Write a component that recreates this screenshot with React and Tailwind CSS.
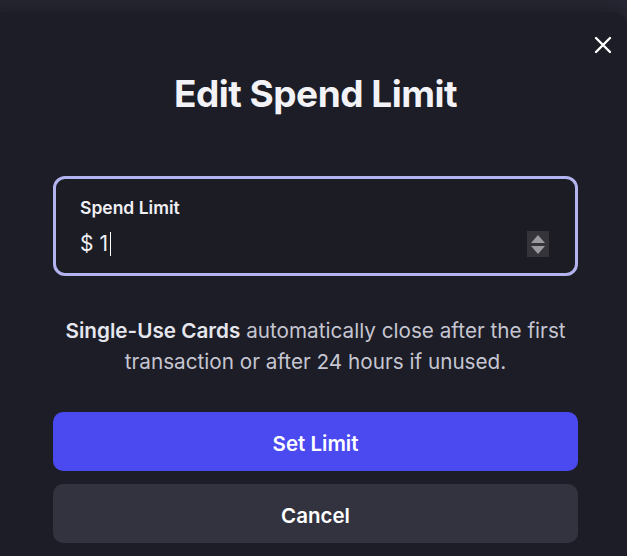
export default function App() {
  return (
    <div
      className="w-[627px] h-[556px] overflow-hidden bg-[#282935] pt-[12px]"
      style={{ fontFamily: 'Inter, "Noto Sans", sans-serif' }}
    >
      <div className="relative -ml-[20px] w-[648px] h-[600px] rounded-2xl bg-[#1c1d26] shadow-[0_-4px_24px_rgba(0,0,0,0.35)] pl-[73px] pr-[50px] pt-[60px]">
        <button className="absolute right-[16px] top-[24px] text-white">
          <svg width="18" height="18" viewBox="0 0 18 18" fill="none" stroke="currentColor" strokeWidth="2.4" strokeLinecap="round">
            <path d="M2 2 L16 16 M16 2 L2 16" />
          </svg>
        </button>

        <h1 className="text-center text-[37px] leading-[44px] font-bold tracking-[-0.5px] text-[#f2f2f7]">
          Edit Spend Limit
        </h1>

        <div className="mt-[60px] h-[100px] rounded-[12px] border-[3px] border-[#b3b3ef] bg-[#1b1c24] pl-[24px] pr-[26px] pt-[18px]">
          <div className="text-[17.5px] leading-[22px] font-semibold text-[#f0f0f5]">Spend Limit</div>
          <div className="mt-[12px] flex items-center justify-between">
            <div className="flex items-center text-[21px] leading-[26px] text-[#f0f0f5]">
              <span>$ 1</span>
              <span className="ml-[2px] inline-block w-[1.5px] h-[24px] bg-white" />
            </div>
            <div className="flex h-[26px] w-[22px] flex-col items-center justify-center gap-[3px] bg-[#34343a]">
              <svg width="14" height="8" viewBox="0 0 14 8"><path d="M7 0 L14 8 L0 8 Z" fill="#9a9a9f" /></svg>
              <svg width="14" height="8" viewBox="0 0 14 8"><path d="M0 0 L14 0 L7 8 Z" fill="#9a9a9f" /></svg>
            </div>
          </div>
        </div>

        <p className="mt-[39px] text-center text-[20.7px] leading-[31px] text-[#c6c6d2]">
          <span className="font-semibold text-[#e6e6ee]">Single-Use Cards</span> automatically close after the first transaction or after 24 hours if unused.
        </p>

        <button className="mt-[35px] h-[59px] w-full rounded-[10px] bg-[#4a4af0] pt-[6px] text-[20.5px] font-semibold text-white">
          Set Limit
        </button>
        <button className="mt-[13px] h-[59px] w-full rounded-[10px] bg-[#33333f] pt-[6px] text-[20.5px] font-semibold text-white">
          Cancel
        </button>
      </div>
    </div>
  );
}
